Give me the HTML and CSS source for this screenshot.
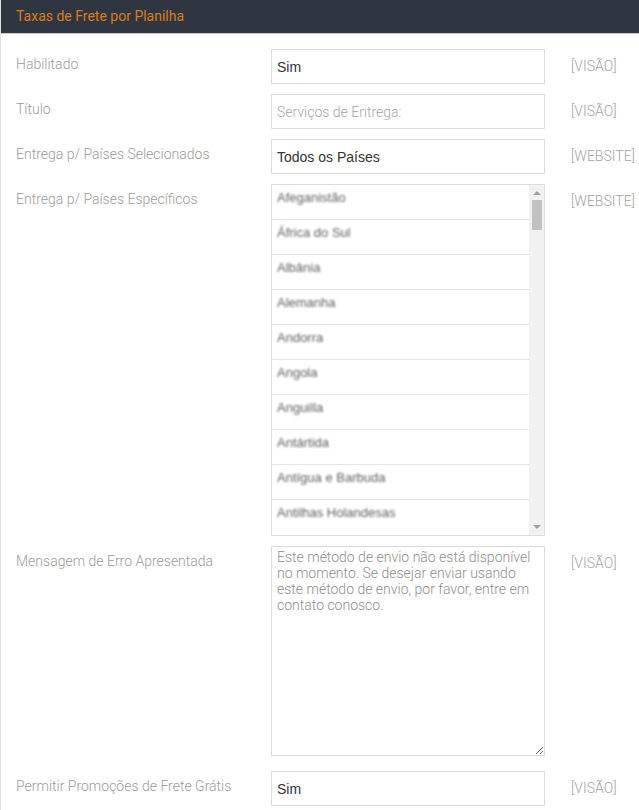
FILE: index.html
```html
<!DOCTYPE html>
<html lang="pt">
<head>
<meta charset="utf-8">
<title>Taxas de Frete por Planilha</title>
<link rel="stylesheet" href="styles.css">
</head>
<body>
<section class="panel">
  <header class="panel-head">Taxas de Frete por Planilha</header>
  <div class="panel-body">
    <div class="row">
      <label class="label">Habilitado</label>
      <div class="control"><div class="select">Sim</div></div>
      <div class="scope">[VISÃO]</div>
    </div>
    <div class="row">
      <label class="label">Título</label>
      <div class="control"><input class="input" type="text" placeholder="Serviços de Entrega:"></div>
      <div class="scope">[VISÃO]</div>
    </div>
    <div class="row">
      <label class="label">Entrega p/ Países Selecionados</label>
      <div class="control"><div class="select">Todos os Países</div></div>
      <div class="scope">[WEBSITE]</div>
    </div>
    <div class="row">
      <label class="label">Entrega p/ Países Específicos</label>
      <div class="control">
        <div class="multi">
          <ul class="options">
            <li><span class="opt">Afeganistão</span></li>
            <li><span class="opt">África do Sul</span></li>
            <li><span class="opt">Albânia</span></li>
            <li><span class="opt">Alemanha</span></li>
            <li><span class="opt">Andorra</span></li>
            <li><span class="opt">Angola</span></li>
            <li><span class="opt">Anguilla</span></li>
            <li><span class="opt">Antártida</span></li>
            <li><span class="opt">Antígua e Barbuda</span></li>
            <li><span class="opt">Antilhas Holandesas</span></li>
          </ul>
          <div class="scrollbar">
            <span class="arrow up"></span>
            <span class="thumb"></span>
            <span class="spacer"></span>
            <span class="arrow down"></span>
          </div>
        </div>
      </div>
      <div class="scope">[WEBSITE]</div>
    </div>
    <div class="row row-tall">
      <label class="label">Mensagem de Erro Apresentada</label>
      <div class="control"><textarea class="textarea">Este método de envio não está disponível no momento. Se desejar enviar usando este método de envio, por favor, entre em contato conosco.</textarea></div>
      <div class="scope">[VISÃO]</div>
    </div>
    <div class="row">
      <label class="label">Permitir Promoções de Frete Grátis</label>
      <div class="control"><div class="select">Sim</div></div>
      <div class="scope">[VISÃO]</div>
    </div>
  </div>
</section>
</body>
</html>
```

FILE: styles.css
```css
html, body {
  margin: 0;
  padding: 0;
  background: #ffffff;
}

body {
  font-family: Roboto, "Liberation Sans", Arial, sans-serif;
  font-size: 14px;
}

.panel {
  border-left: 1px solid #e2e2e2;
  min-height: 810px;
  box-sizing: border-box;
}

.panel-head {
  height: 34px;
  box-sizing: border-box;
  background: #303641;
  color: #d97c1d;
  font-size: 14px;
  font-weight: 400;
  line-height: 33px;
  padding-left: 15px;
  border-bottom: 1px solid #c9ccd0;
}

.panel-body {
  padding-top: 15px;
}

.row {
  display: grid;
  grid-template-columns: 270px 274px 1fr;
  margin-bottom: 10px;
}

.row-tall {
  margin-bottom: 15px;
}

.label {
  padding-left: 15px;
  padding-top: 5px;
  color: #9b9b9b;
  font-weight: 300;
  line-height: 20px;
  white-space: nowrap;
}

.scope {
  padding-left: 26px;
  padding-top: 7px;
  color: #a3a3a3;
  font-weight: 300;
  line-height: 20px;
  white-space: nowrap;
}

.select,
.input {
  display: block;
  width: 274px;
  height: 35px;
  box-sizing: border-box;
  border: 1px solid #dcdcdc;
  padding: 0 5px;
  line-height: 34px;
  font-family: "Liberation Sans", Arial, sans-serif;
  font-size: 14px;
  color: #333333;
  background: #ffffff;
  margin: 0;
}

.input {
  font-family: Roboto, "Liberation Sans", Arial, sans-serif;
  font-weight: 300;
  outline: none;
}

.input::placeholder {
  color: #a6a6a6;
}

.multi {
  display: flex;
  width: 274px;
  height: 352px;
  box-sizing: border-box;
  border: 1px solid #dcdcdc;
  background: #ffffff;
}

.options {
  flex: 1;
  list-style: none;
  margin: 0;
  padding: 0;
}

.options li {
  border-bottom: 1px solid #e4e4e4;
  padding: 5px 5px 0;
  box-sizing: content-box;
  height: 29px;
  font-family: "Liberation Sans", Arial, sans-serif;
  font-size: 13px;
  line-height: 16px;
}

.options li:last-child {
  border-bottom: none;
}

.opt {
  display: inline-block;
  color: #5e5e5e;
  filter: blur(0.8px);
  will-change: filter;
}

.scrollbar {
  width: 15px;
  background: #f1f1f1;
  display: flex;
  flex-direction: column;
  align-items: center;
}

.arrow {
  width: 0;
  height: 0;
  border-left: 4px solid transparent;
  border-right: 4px solid transparent;
}

.arrow.up {
  margin-top: 6px;
  border-bottom: 4px solid #a3a3a3;
}

.arrow.down {
  margin-bottom: 6px;
  border-top: 4px solid #a3a3a3;
}

.thumb {
  margin-top: 5px;
  width: 10px;
  height: 30px;
  background: #c1c1c1;
}

.spacer {
  flex: 1;
}

.textarea {
  display: block;
  width: 274px;
  height: 210px;
  box-sizing: border-box;
  border: 1px solid #dcdcdc;
  padding: 2px 5px;
  margin: 0;
  font-family: Roboto, "Liberation Sans", Arial, sans-serif;
  font-weight: 300;
  font-size: 14px;
  line-height: 16px;
  color: #8e8e8e;
  resize: vertical;
  outline: none;
}
```
